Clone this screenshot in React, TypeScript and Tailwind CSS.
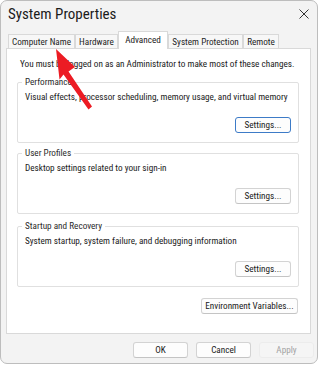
import type { ReactNode } from "react";

// the reference text is narrow (Segoe UI, squeezed): Roboto at condensed width is the nearest fit
const cond = "font-['Roboto',sans-serif] [font-stretch:condensed]";

function Btn({
  children,
  width,
  focused,
  disabled,
}: {
  children: ReactNode;
  width: string;
  focused?: boolean;
  disabled?: boolean;
}) {
  return (
    <button
      className={`${cond} ${width} h-[16px] rounded-[3px] border whitespace-nowrap text-[9.2px] leading-[14px] ${
        focused
          ? "border-[#3d7bc7] bg-[#fdfdfd] text-[#1a1a1a]"
          : disabled
            ? "border-[#ececec] bg-[#f5f5f5] text-[#a3a3a3]"
            : "border-[#d3d3d3] border-b-[#c4c4c4] bg-[#fdfdfd] text-[#1a1a1a]"
      }`}
    >
      {children}
    </button>
  );
}

function Group({
  title,
  text,
  focused,
  className,
}: {
  title: string;
  text: string;
  focused?: boolean;
  className: string;
}) {
  return (
    <div
      className={`ml-[10px] w-[282px] h-[61px] border border-[#e0e0e0] rounded-[2px] ${className}`}
    >
      <div
        className={`${cond} -mt-[8px] ml-[4px] px-[3px] w-fit bg-white text-[9.2px] leading-[14px] text-[#2b2b2b] whitespace-nowrap`}
      >
        {title}
      </div>
      <p
        className={`${cond} pl-[7px] mt-[1px] text-[9.2px] leading-[14px] text-[#1a1a1a] whitespace-nowrap`}
      >
        {text}
      </p>
      <div className="flex justify-end pr-[7px] mt-[13px]">
        <Btn width="w-[56px]" focused={focused}>
          Settings...
        </Btn>
      </div>
    </div>
  );
}

export default function App() {
  const tabs = [
    { label: "Computer Name", w: "w-[67px]" },
    { label: "Hardware", w: "w-[43px]" },
    { label: "Advanced", w: "w-[50px]", active: true },
    { label: "System Protection", w: "w-[75px]" },
    { label: "Remote", w: "w-[36px]" },
  ];

  return (
    <div className="w-[320px] h-[365px] bg-white text-[#1a1a1a]">
      <div className="relative w-[318px] h-[364px] bg-[#f3f3f3] border border-[#bdbdbd] rounded-[7px] flex flex-col overflow-hidden">
        <div className="h-[25px] flex items-center justify-between pl-[7px] pr-[8px]">
          <span className={`${cond} text-[15px] leading-[20px] text-[#1b1b1b]`}>
            System Properties
          </span>
          <svg width="10" height="10" viewBox="0 0 10 10">
            <path d="M0.5 0.5L9.5 9.5M9.5 0.5L0.5 9.5" stroke="#333" strokeWidth="1" />
          </svg>
        </div>

        <div className="h-[22px] flex items-end pl-[7px]">
          {tabs.map((t) =>
            t.active ? (
              <div
                key={t.label}
                className={`${cond} ${t.w} h-[18px] -mb-[1px] relative z-10 bg-white border border-b-0 border-[#d9d9d9] flex items-start justify-center pt-[1px] text-[9.2px] leading-[14px] whitespace-nowrap`}
              >
                {t.label}
              </div>
            ) : (
              <div
                key={t.label}
                className={`${cond} ${t.w} h-[14px] bg-[#f7f7f7] border border-b-0 border-[#d9d9d9] flex items-center justify-center text-[9.2px] leading-[14px] text-[#1f1f1f] whitespace-nowrap`}
              >
                {t.label}
              </div>
            ),
          )}
        </div>

        <div className="ml-[5px] w-[305px] h-[286px] border border-[#d9d9d9] bg-white">
          <p className={`${cond} pt-[8px] pl-[13px] text-[9.2px] leading-[14px] whitespace-nowrap`}>
            You must be logged on as an Administrator to make most of these changes.
          </p>
          <Group
            className="mt-[11px]"
            title="Performance"
            text="Visual effects, processor scheduling, memory usage, and virtual memory"
            focused
          />
          <Group
            className="mt-[10px]"
            title="User Profiles"
            text="Desktop settings related to your sign-in"
          />
          <Group
            className="mt-[12px]"
            title="Startup and Recovery"
            text="System startup, system failure, and debugging information"
          />
          <div className="flex justify-end pr-[12px] mt-[11px]">
            <Btn width="w-[97px]">Environment Variables...</Btn>
          </div>
        </div>

        <div className="flex justify-end gap-[8px] pr-[3px] mt-[8px]">
          <Btn width="w-[55px]">OK</Btn>
          <Btn width="w-[55px]">Cancel</Btn>
          <Btn width="w-[55px]" disabled>
            Apply
          </Btn>
        </div>

        <svg
          className="absolute left-0 top-0 pointer-events-none"
          width="320"
          height="365"
          viewBox="0 0 320 365"
        >
          <polygon
            points="55,48 74,66 67.5,70.5 91,105.5 87.5,108.5 62.5,73.5 58.5,78.5"
            fill="#ec1c24"
          />
        </svg>
      </div>
    </div>
  );
}
